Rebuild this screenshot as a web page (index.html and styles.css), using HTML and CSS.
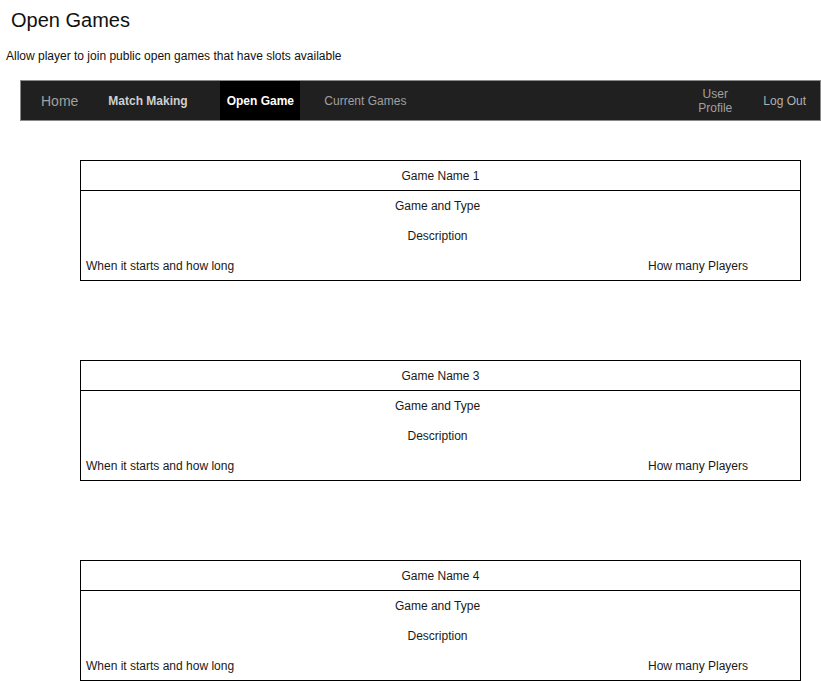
FILE: index.html
```html
<!DOCTYPE html>
<html>
<head>
<meta charset="utf-8">
<link rel="stylesheet" href="styles.css">
</head>
<body>
<h1 class="title">Open Games</h1>
<p class="subtitle">Allow player to join public open games that have slots available</p>
<nav class="nav">
  <a class="nav-item home">Home</a>
  <a class="nav-item match">Match Making</a>
  <a class="nav-item active">Open Game</a>
  <a class="nav-item current">Current Games</a>
  <span class="spacer"></span>
  <a class="nav-item profile">User<br>Profile</a>
  <a class="nav-item logout">Log Out</a>
</nav>
<main class="games">
  <section class="card">
    <div class="card-head">Game Name 1</div>
    <div class="row">Game and Type</div>
    <div class="row">Description</div>
    <div class="row split"><span>When it starts and how long</span><span class="players">How many Players</span></div>
  </section>
  <section class="card">
    <div class="card-head">Game Name 3</div>
    <div class="row">Game and Type</div>
    <div class="row">Description</div>
    <div class="row split"><span>When it starts and how long</span><span class="players">How many Players</span></div>
  </section>
  <section class="card">
    <div class="card-head">Game Name 4</div>
    <div class="row">Game and Type</div>
    <div class="row">Description</div>
    <div class="row split"><span>When it starts and how long</span><span class="players">How many Players</span></div>
  </section>
</main>
</body>
</html>
```

FILE: styles.css
```css
html, body {
  margin: 0;
  padding: 0;
  background: #fff;
}
body {
  font-family: "Liberation Sans", Arial, sans-serif;
  color: #1a1a1a;
  font-size: 12px;
}
.title {
  margin: 0;
  padding: 9px 0 0 11px;
  font-size: 20px;
  line-height: 23px;
  font-weight: normal;
  color: #111;
}
.subtitle {
  margin: 17px 0 0 6px;
  font-size: 12px;
  line-height: 14px;
  color: #111;
}
.nav {
  margin: 17px 0 0 20px;
  width: 801px;
  height: 41px;
  box-sizing: border-box;
  border: 1px solid #8a8a8a;
  background: #202020;
  display: flex;
  align-items: stretch;
}
.nav-item {
  display: flex;
  align-items: center;
  justify-content: center;
  font-size: 12px;
  color: #a0a0a0;
  text-align: center;
  line-height: 14px;
}
.home {
  font-size: 14px;
  padding-left: 20px;
  color: #a0a0a0;
}
.match {
  padding-left: 30px;
  font-weight: bold;
  color: #cfcfcf;
  width: 112px;
  justify-content: flex-start;
}
.active {
  background: #000;
  color: #fff;
  font-weight: bold;
  width: 80px;
}
.current {
  padding-left: 24px;
}
.spacer {
  flex: 1;
}
.profile {
  width: 50px;
  margin-right: 23px;
}
.logout {
  padding-right: 14px;
  color: #b0b0b0;
}
.games {
  margin: 39px 0 0 80px;
  display: flex;
  flex-direction: column;
  gap: 79px;
}
.card {
  width: 721px;
  box-sizing: border-box;
  border: 1px solid #000;
}
.card-head {
  height: 29px;
  border-bottom: 1px solid #000;
  display: flex;
  align-items: center;
  justify-content: center;
}
.row {
  height: 30px;
  display: flex;
  align-items: center;
  justify-content: center;
  padding-right: 6px;
}
.split {
  justify-content: space-between;
  padding: 0 52px 0 5px;
  height: 29px;
}
```
